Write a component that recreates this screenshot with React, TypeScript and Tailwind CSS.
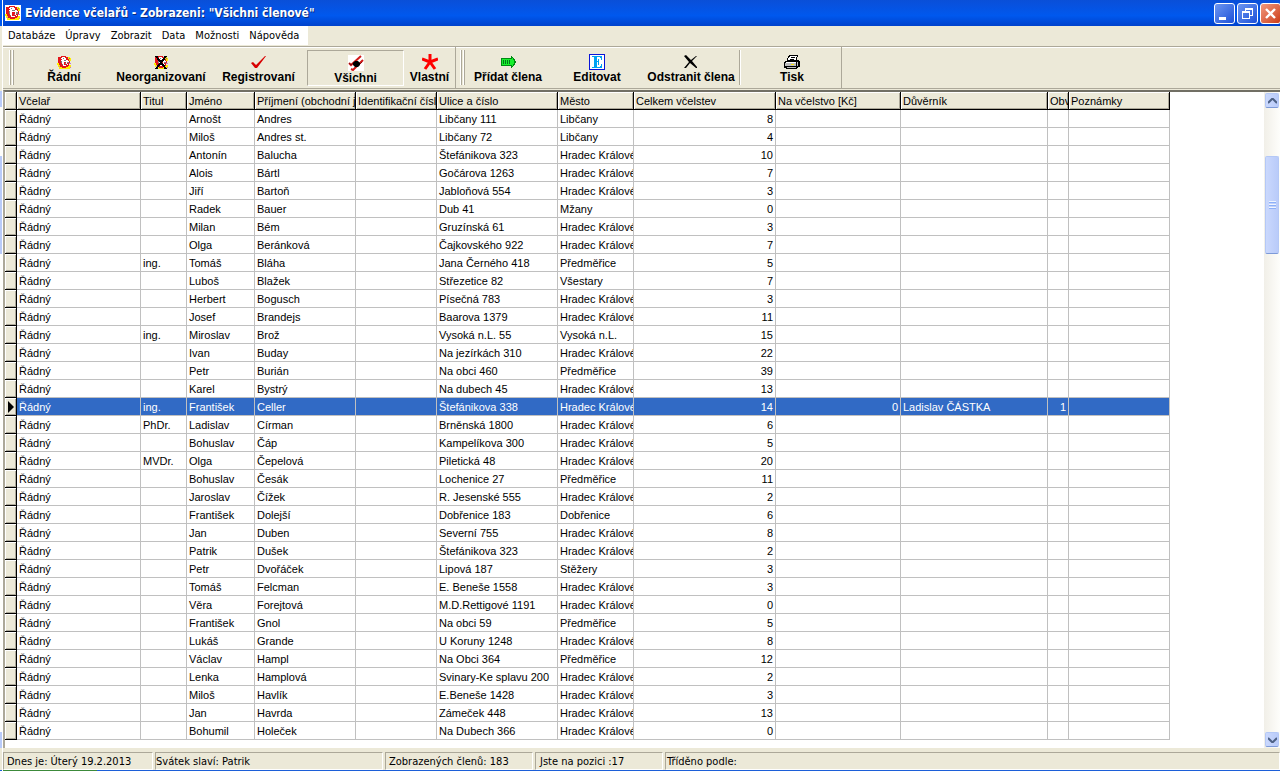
import type { ReactNode } from "react";

const menuItems = ["Databáze", "Úpravy", "Zobrazit", "Data", "Možnosti", "Nápověda"];

const columns = [
  { title: "Včelař", width: 124 },
  { title: "Titul", width: 46 },
  { title: "Jméno", width: 68 },
  { title: "Příjmení (obchodní jméno)", width: 101 },
  { title: "Identifikační číslo", width: 81 },
  { title: "Ulice a číslo", width: 121 },
  { title: "Město", width: 76 },
  { title: "Celkem včelstev", width: 142 },
  { title: "Na včelstvo [Kč]", width: 125 },
  { title: "Důvěrník", width: 147 },
  { title: "Obvod", width: 21 },
  { title: "Poznámky", width: 101 },
];

// titul, jméno, příjmení, ulice, město, včelstev
const HK = "Hradec Králové";
const members: [string, string, string, string, string, number][] = [
  ["", "Arnošt", "Andres", "Libčany 111", "Libčany", 8],
  ["", "Miloš", "Andres st.", "Libčany 72", "Libčany", 4],
  ["", "Antonín", "Balucha", "Štefánikova 323", HK, 10],
  ["", "Alois", "Bártl", "Gočárova 1263", HK, 7],
  ["", "Jiří", "Bartoň", "Jabloňová 554", HK, 3],
  ["", "Radek", "Bauer", "Dub 41", "Mžany", 0],
  ["", "Milan", "Bém", "Gruzínská 61", HK, 3],
  ["", "Olga", "Beránková", "Čajkovského 922", HK, 7],
  ["ing.", "Tomáš", "Bláha", "Jana Černého 418", "Předměřice", 5],
  ["", "Luboš", "Blažek", "Střezetice 82", "Všestary", 7],
  ["", "Herbert", "Bogusch", "Písečná 783", HK, 3],
  ["", "Josef", "Brandejs", "Baarova 1379", HK, 11],
  ["ing.", "Miroslav", "Brož", "Vysoká n.L. 55", "Vysoká n.L.", 15],
  ["", "Ivan", "Buday", "Na jezírkách 310", HK, 22],
  ["", "Petr", "Burián", "Na obci 460", "Předměřice", 39],
  ["", "Karel", "Bystrý", "Na dubech 45", HK, 13],
  ["ing.", "František", "Celler", "Štefánikova 338", HK, 14],
  ["PhDr.", "Ladislav", "Círman", "Brněnská 1800", HK, 6],
  ["", "Bohuslav", "Čáp", "Kampelíkova 300", HK, 5],
  ["MVDr.", "Olga", "Čepelová", "Piletická 48", HK, 20],
  ["", "Bohuslav", "Česák", "Lochenice 27", "Předměřice", 11],
  ["", "Jaroslav", "Čížek", "R. Jesenské 555", HK, 2],
  ["", "František", "Dolejší", "Dobřenice 183", "Dobřenice", 6],
  ["", "Jan", "Duben", "Severní 755", HK, 8],
  ["", "Patrik", "Dušek", "Štefánikova 323", HK, 2],
  ["", "Petr", "Dvořáček", "Lipová 187", "Stěžery", 3],
  ["", "Tomáš", "Felcman", "E. Beneše 1558", HK, 3],
  ["", "Věra", "Forejtová", "M.D.Rettigové 1191", HK, 0],
  ["", "František", "Gnol", "Na obci 59", "Předměřice", 5],
  ["", "Lukáš", "Grande", "U Koruny 1248", HK, 8],
  ["", "Václav", "Hampl", "Na Obci 364", "Předměřice", 12],
  ["", "Lenka", "Hamplová", "Svinary-Ke splavu 200", HK, 2],
  ["", "Miloš", "Havlík", "E.Beneše 1428", HK, 3],
  ["", "Jan", "Havrda", "Zámeček 448", HK, 13],
  ["", "Bohumil", "Holeček", "Na Dubech 366", HK, 0],
];
const selectedIndex = 16;

function BeeIcon({ crossed = false, size = 15 }: { crossed?: boolean; size?: number }) {
  return (
    <svg width={size} height={size} viewBox="0 0 15 15" shapeRendering="crispEdges" aria-hidden="true">
      {size > 15 && <path d="M0 0h15v15H0z" fill="#fff" />}
      <path d="M0 8h2v1h1v2h2v2h3v1H2v-2H1v-2H0zM8 10h6v2h-1v2H8zM10 2h3v1h1v3h-4z" fill="#ffee00" />
      <path d="M1 2h3V1h5v1h2v2h1v2h1v3h-1v2h-1v1H9v1H5v-1H3v-2H2V8H1z" fill="#e3151b" />
      <path d="M5 2h3v1h1v2h2v1h1v2h-2v1H9V7H7v3H5V8H4V5h1V4H4V3h1z" fill="#fff" />
      <path d="M6 10h3v1H6zM10 9h1v1h-1z" fill="#fff" />
      <path d="M6 3h1v1H6zM7 5h2v1H7zM10 7h2v1h-2zM4 6h1v2H4zM8 8h1v1H8zM5 9h1v1H5zM12 3h1v1h-1z" fill="#7d7d7d" />
      <path d="M12 8h2v1h-2zM13 12h1v1h-1zM2 11h1v1H2z" fill="#c080c0" />
      {crossed && <path d="M2 1l10 13M12 1L2 14" stroke="#000" strokeWidth="2" />}
    </svg>
  );
}

function CheckIcon() {
  return (
    <svg width="15" height="14" viewBox="0 0 15 14" aria-hidden="true">
      <path d="M0 8l2-1 3 3 9-9h1L6 13H4z" fill="#d80000" />
    </svg>
  );
}

function AllIcon() {
  return (
    <svg width="16" height="16" viewBox="0 0 16 16" aria-hidden="true">
      <path d="M0 0h16v16H0z" fill="#fff" />
      <path d="M1 8l2 2L13 1M3 14l2 1L15 5" fill="none" stroke="#d01818" strokeWidth="2" />
      <path d="M1 8l2 2 3-3M9 12l5-5" fill="none" stroke="#8b1010" strokeWidth="1" />
      <path d="M7 6h3l2 2v2l-2 2H7L5 10V8z" fill="#000" />
    </svg>
  );
}

function StarIcon() {
  return (
    <svg width="16" height="16" viewBox="0 0 16 16" aria-hidden="true">
      <path d="M8 8V0M8 8L0 5M8 8l8-3M8 8l-5 7M8 8l5 7" stroke="#f00" strokeWidth="3" />
    </svg>
  );
}

function AddIcon() {
  return (
    <svg width="15" height="12" viewBox="0 0 15 12" shapeRendering="crispEdges" aria-hidden="true">
      <path d="M0 2h10V0h1v1h1v1h1v1h1v2h1v2h-1v2h-1v1h-1v1h-1v1h-1v-2H0z" fill="#008a12" />
      <path d="M1 3h10V2h1v2h1v4h-1v2h-1V9H1z" fill="#17f02c" />
      <path d="M2 4h1v4H2zM4 4h1v4H4zM6 4h1v4H6zM8 4h1v4H8z" fill="#00791a" />
    </svg>
  );
}

function EditIcon() {
  return (
    <svg width="16" height="16" viewBox="0 0 16 16" shapeRendering="crispEdges" aria-hidden="true">
      <path d="M0 0h16v16H0z" fill="#0a14d8" />
      <path d="M1 1h14v14H1z" fill="#fff" />
      <path d="M3 2h10v4h-1V4h-1V3H8v4h1V5h1v6H9V8H8v5h3v-1h1v-2h1v4H3v-1h2V3H3z" fill="#00a2f2" />
    </svg>
  );
}

function DeleteIcon() {
  return (
    <svg width="14" height="14" viewBox="0 0 14 14" aria-hidden="true">
      <path d="M0 1l2-1 5 5 5-4h1L8 6l5 6v1h-1L6 8l-4 5H0l5-6z" fill="#000" />
    </svg>
  );
}

function PrintIcon() {
  return (
    <svg width="16" height="15" viewBox="0 0 16 15" shapeRendering="crispEdges" aria-hidden="true">
      <path d="M5 0h9v2h-1v3h2v1h1v6h-2v1h-1v1H2v-1H0V7h1V6h2V3h1V1h1z" fill="#000" />
      <path d="M6 1h7v1h-1v3H4V3h1V2h1z" fill="#fff" />
      <path d="M7 2h4v1H7zM6 4h4v1H6z" fill="#000" />
      <path d="M2 7h10v1H2z" fill="#fff" />
      <path d="M1 8h11v3H1zM3 12h9v1H3zM13 7h1v4h-1z" fill="#bdbdbd" />
      <path d="M7 9h3v1H7z" fill="#ffe600" />
    </svg>
  );
}

function ToolButton({
  label,
  icon,
  width,
  pressed = false,
}: {
  label: string;
  icon: ReactNode;
  width: string;
  pressed?: boolean;
}) {
  return (
    <button
      type="button"
      aria-pressed={pressed}
      className={`flex h-9 flex-col items-center whitespace-nowrap border text-xs font-bold leading-[14px] ${width} ${
        pressed ? "border-[#aca899] border-r-white border-b-white pt-1" : "border-transparent pt-[3px]"
      }`}
    >
      <span className="flex h-4 items-center justify-center">{icon}</span>
      <span>{label}</span>
    </button>
  );
}

function Handle() {
  return (
    <div className="mr-0.5 flex gap-px">
      <div className="w-0.5 border-l border-white bg-[#aca899]" />
      <div className="w-0.5 border-l border-white bg-[#aca899]" />
    </div>
  );
}

function TitleBar() {
  const base = "flex size-[21px] items-center justify-center rounded-[3px] border border-white";
  return (
    <header className="flex h-[26px] items-center bg-linear-to-b from-[#0a4fd8] via-[#0058ee] via-60% to-[#0042cc] pl-0.5">
      <BeeIcon size={16} />
      <h1 className="ml-1 grow whitespace-nowrap font-['DejaVu_Sans_Condensed','Noto_Sans',sans-serif] text-xs font-bold text-white [text-shadow:1px_1px_#0a2a80]">
        Evidence včelařů - Zobrazeni: "Všichni členové"
      </h1>
      <div className="-mr-px flex gap-0.5">
        <button type="button" aria-label="Minimalizovat" className={`${base} bg-linear-to-br from-[#6d95f0] to-[#1d4fd8]`}>
          <svg width="19" height="19" viewBox="0 0 19 19" aria-hidden="true">
            <path d="M4 13h7v3H4z" fill="#fff" />
          </svg>
        </button>
        <button type="button" aria-label="Obnovit" className={`${base} bg-linear-to-br from-[#6d95f0] to-[#1d4fd8]`}>
          <svg width="19" height="19" viewBox="0 0 19 19" shapeRendering="crispEdges" aria-hidden="true">
            <path d="M7 4h8v8h-3v-1h2V6H8v1H7zM4 7h8v8H4zM5 9v5h6V9z" fill="#fff" fillRule="evenodd" />
          </svg>
        </button>
        <button type="button" aria-label="Zavřít" className={`${base} bg-linear-to-br from-[#f0987c] to-[#cc3a10]`}>
          <svg width="19" height="19" viewBox="0 0 19 19" aria-hidden="true">
            <path d="M5 5l9 9M14 5l-9 9" stroke="#fff" strokeWidth="2.4" />
          </svg>
        </button>
      </div>
    </header>
  );
}

function Toolbar() {
  return (
    <div className="flex h-[43px] border-y border-[#aca899] shadow-[inset_0_1px_#fff]">
      <div className="flex border-r border-[#aca899] py-[3px] pl-1.5">
        <Handle />
        <ToolButton label="Řádní" icon={<BeeIcon />} width="w-24" />
        <ToolButton label="Neorganizovaní" icon={<BeeIcon crossed />} width="w-[98px]" />
        <ToolButton label="Registrovaní" icon={<CheckIcon />} width="w-[97px]" />
        <ToolButton label="Všichni" icon={<AllIcon />} width="w-[97px]" pressed />
        <ToolButton label="Vlastní" icon={<StarIcon />} width="w-[51px]" />
      </div>
      <div className="flex border-r border-[#aca899] py-[3px] pl-1">
        <Handle />
        <ToolButton label="Přídat člena" icon={<AddIcon />} width="w-[82px]" />
        <ToolButton label="Editovat" icon={<EditIcon />} width="w-24" />
        <ToolButton label="Odstranit člena" icon={<DeleteIcon />} width="w-[92px]" />
        <div className="mx-0.5 w-0.5 border-r border-white bg-[#aca899]" />
        <ToolButton label="Tisk" icon={<PrintIcon />} width="w-[98px]" />
      </div>
    </div>
  );
}

function MemberTable() {
  const head =
    "h-[18px] overflow-hidden border-r border-b border-black bg-[#ece9d8] p-0 pl-0.5 text-left font-normal whitespace-nowrap shadow-[inset_1px_1px_#fff,inset_-1px_-1px_#aca899]";
  const cell = "h-[18px] overflow-hidden border-r border-b border-[#c0c0c0] p-0 px-0.5 whitespace-nowrap";
  return (
    <table className="w-[1165px] table-fixed border-separate border-spacing-0 text-[11px] leading-4">
      <colgroup>
        <col style={{ width: 12 }} />
        {columns.map((c) => (
          <col key={c.title} style={{ width: c.width }} />
        ))}
      </colgroup>
      <thead>
        <tr>
          <th className={head} aria-label="Aktuální řádek" />
          {columns.map((c) => (
            <th key={c.title} scope="col" className={head}>
              {c.title}
            </th>
          ))}
        </tr>
      </thead>
      <tbody>
        {members.map(([degree, first, last, street, city, hives], i) => {
          const selected = i === selectedIndex;
          return (
            <tr key={i} aria-selected={selected} className={selected ? "bg-[#316ac5] text-white" : "bg-white"}>
              <td className={head}>
                {selected && (
                  <svg className="ml-px" width="6" height="12" viewBox="0 0 6 12" aria-hidden="true">
                    <path d="M0 0l6 6-6 6z" fill="#000" />
                  </svg>
                )}
              </td>
              <td className={cell}>Řádný</td>
              <td className={cell}>{degree}</td>
              <td className={cell}>{first}</td>
              <td className={cell}>{last}</td>
              <td className={cell} />
              <td className={cell}>{street}</td>
              <td className={cell}>{city}</td>
              <td className={`${cell} text-right`}>{hives}</td>
              <td className={`${cell} text-right`}>{selected && 0}</td>
              <td className={cell}>{selected && "Ladislav ČÁSTKA"}</td>
              <td className={`${cell} text-right`}>{selected && 1}</td>
              <td className={cell} />
            </tr>
          );
        })}
      </tbody>
    </table>
  );
}

function Scrollbar() {
  const box =
    "flex w-[14px] shrink-0 items-center justify-center rounded-[2px] border border-[#b4c8f6] bg-linear-to-r from-[#cad8fd] to-[#b9cbf9]";
  return (
    <div className="flex w-4 shrink-0 flex-col items-center bg-linear-to-r from-[#f1efe8] to-[#fefefb] py-px">
      <button type="button" aria-label="Nahoru" className={`${box} h-[15px] border-b-[#7d9ad8]`}>
        <svg width="9" height="6" viewBox="0 0 9 6" aria-hidden="true">
          <path d="M0 5l4-4h1l4 4" fill="none" stroke="#4d6185" strokeWidth="2" />
        </svg>
      </button>
      <div className="h-12 shrink-0" />
      <div className={`${box} h-[98px] flex-col gap-px border-b-[#7d9ad8]`}>
        <div className="h-px w-[7px] bg-[#8cb0f8] shadow-[0_-1px_#eef4fe]" />
        <div className="mt-px h-px w-[7px] bg-[#8cb0f8] shadow-[0_-1px_#eef4fe]" />
        <div className="mt-px h-px w-[7px] bg-[#8cb0f8] shadow-[0_-1px_#eef4fe]" />
      </div>
      <div className="grow" />
      <button type="button" aria-label="Dolů" className={`${box} h-[15px] border-b-[#7d9ad8]`}>
        <svg width="9" height="6" viewBox="0 0 9 6" aria-hidden="true">
          <path d="M0 1l4 4h1l4-4" fill="none" stroke="#4d6185" strokeWidth="2" />
        </svg>
      </button>
    </div>
  );
}

function StatusBar() {
  const panel = "h-[18px] shrink-0 whitespace-nowrap border border-[#aca899] border-r-white border-b-white";
  return (
    <footer className="bg-[#ece9d8]">
      <div className="flex h-[22px] gap-0.5 pt-1 font-['DejaVu_Sans_Condensed','Noto_Sans',sans-serif] text-[11px] leading-[18px]">
        <div className={`${panel} w-[150px] pl-[3px]`}>Dnes je: Úterý 19.2.2013</div>
        <div className={`${panel} w-[228px]`}>Svátek slaví: Patrik</div>
        <div className={`${panel} w-[148px] pl-[3px]`}>Zobrazených členů: 183</div>
        <div className={`${panel} w-32 pl-1`}>Jste na pozici :17</div>
        <div className={`${panel} grow pl-px`}>Tříděno podle:</div>
      </div>
      <div className="flex h-px bg-[#1c5fd8]">
        <div className="w-[94px] bg-[#3c8a3a]" />
      </div>
    </footer>
  );
}

// Sliver of the window that lies behind this one
function BackWindowEdge() {
  return (
    <div className="flex w-[3px] shrink-0 flex-col border-r border-white">
      <div className="h-[26px] bg-[#0058ee]" />
      <div className="h-[65px]" />
      <div className="flex grow flex-col bg-[#fefefb]">
        <div className="h-4 bg-[#b9cbf9]" />
        <div className="h-[49px]" />
        <div className="h-[98px] bg-[#b9cbf9]" />
        <div className="grow" />
        <div className="h-4 bg-[#b9cbf9]" />
      </div>
      <div className="h-[22px]" />
      <div className="h-px bg-[#1c5fd8]" />
    </div>
  );
}

export default function App() {
  return (
    <div className="flex min-h-screen overflow-hidden bg-[#ece9d8] font-['Liberation_Sans',Arial,sans-serif] text-black">
      <BackWindowEdge />
      <div className="flex min-w-0 grow flex-col">
        <TitleBar />
        <nav className="flex h-5 items-start font-['DejaVu_Sans_Condensed','Noto_Sans',sans-serif] text-[11px] leading-4">
          <div className="flex bg-white pr-1">
            {menuItems.map((item) => (
              <button key={item} type="button" className="h-[19px] px-[5px]">
                {item}
              </button>
            ))}
          </div>
        </nav>
        <Toolbar />
        <main className="mt-px flex grow border-t-2 border-l-2 border-[#716f64] border-l-[#aca899] bg-white">
          <div className="min-w-0 grow overflow-hidden pb-2">
            <MemberTable />
          </div>
          <Scrollbar />
        </main>
        <StatusBar />
      </div>
    </div>
  );
}
